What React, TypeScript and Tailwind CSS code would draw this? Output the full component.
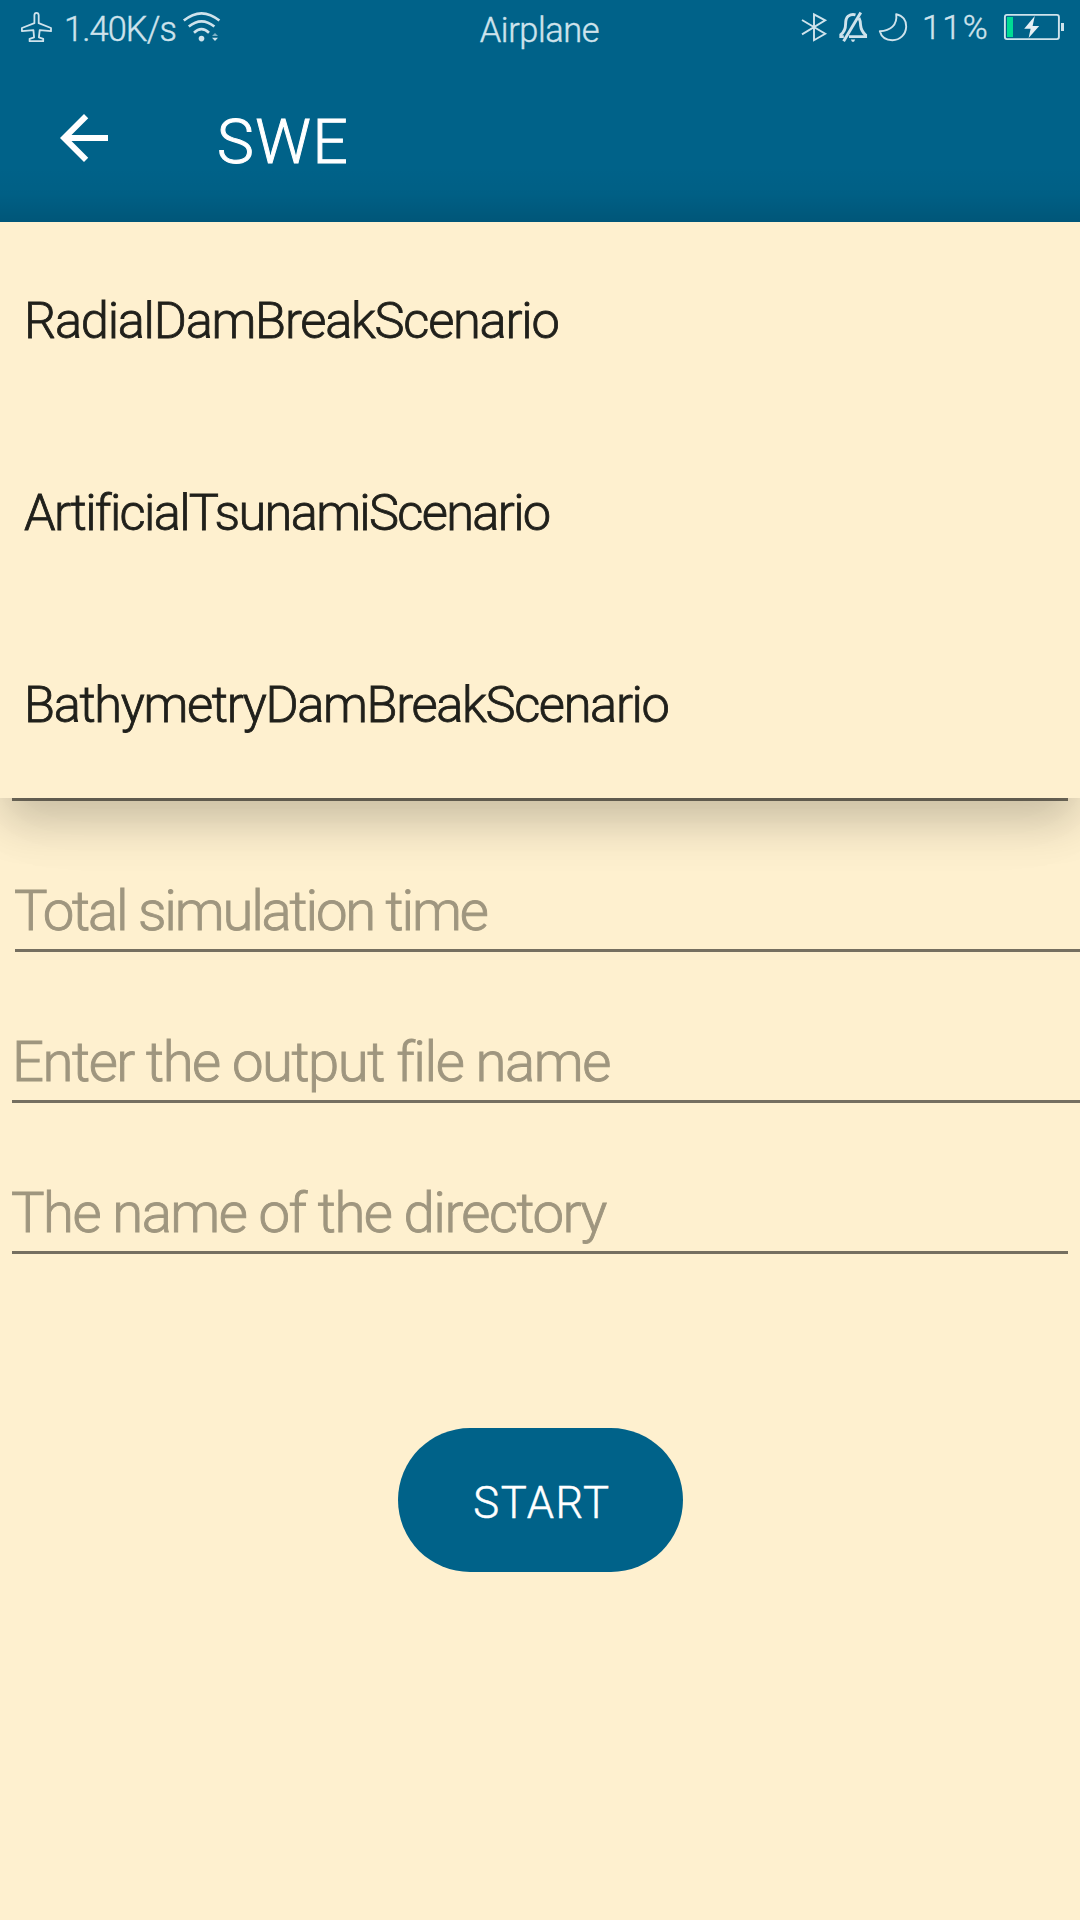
import React from "react";

const INK = "#cfe3ec";

function AirplaneIcon() {
  return (
    <svg className="h-[34px] w-[36px] shrink-0" viewBox="19 10 36 34" fill="none" stroke={INK} strokeWidth="1.8" strokeLinejoin="round">
      <path d="M34.4 15.3Q34.4 12.8 36.5 12.8T38.7 15.3V23.2L51 28V31.2L39.7 30.2L38.9 37.3L43.2 38.8V41.2H29.6V38.8L34.1 37.3L33.4 30.2L21.9 31.2V28L34.4 23.2Z" />
    </svg>
  );
}

function WifiIcon() {
  return (
    <svg className="h-[34px] w-[40px] shrink-0" viewBox="182 10 40 34" fill="none" stroke={INK} strokeWidth="2.6">
      <path d="M183.8 20.6Q201.5 6 219.4 20.6" />
      <path d="M188.8 26.6Q201.5 16 214.4 26.6" />
      <path d="M194 32.8Q201.5 25.6 209 32.8" />
      <circle cx="201.5" cy="38.6" r="2.8" fill={INK} stroke="none" />
      <path d="M212 36H218L215 33Z" fill={INK} fillOpacity="0.6" stroke="none" />
      <path d="M212 37.7H218L215 41Z" fill={INK} stroke="none" />
    </svg>
  );
}

function BluetoothIcon() {
  return (
    <svg className="h-[34px] w-[28px] shrink-0" viewBox="800 10 28 34" fill="none" stroke={INK} strokeWidth="1.9">
      <path d="M802 20L825.2 33.8L814 40.2V14.3L825.2 20.4L802 34.4" />
    </svg>
  );
}

function MutedBellIcon() {
  return (
    <svg className="h-[34px] w-[32px] shrink-0" viewBox="837 10 32 34" fill="none" stroke={INK} strokeWidth="2.9">
      <path d="M855.5 14.8Q851.5 13.6 848.2 16.2Q845.6 18.5 845.6 24Q845.6 31 840.8 34.6V36.6H843.8M849 36.6H865.6V35Q861.2 31 860.6 25.5Q860.6 21 859 18" />
      <path d="M843.6 41.2L860.8 12.6" />
      <path d="M850.8 39.4H855.2L854 41.8H852Z" fill={INK} stroke="none" />
    </svg>
  );
}

function MoonIcon() {
  return (
    <svg className="h-[34px] w-[32px] shrink-0" viewBox="877 10 32 34" fill="none" stroke={INK} strokeWidth="1.9" strokeLinejoin="round">
      <path d="M896.2 14.2C903 15.6 906.4 20.6 906.2 26.6C905.8 34.5 900 40.2 892.4 40.2C886.2 40.2 881.4 36.8 879.8 31.2C890.5 31 897.6 25 896.2 14.2Z" />
    </svg>
  );
}

function BatteryIcon() {
  return (
    <svg className="h-[34px] w-[62px] shrink-0" viewBox="1003 10 62 34" fill="none">
      <rect x="1004.9" y="14.9" width="54" height="24.2" rx="2" stroke={INK} strokeWidth="1.9" />
      <rect x="1007" y="17" width="6" height="20" fill="#00dc94" />
      <path d="M1034.8 16L1024.2 28.8H1030.6L1028.6 38L1039.2 26H1032.6Z" fill="#e6f0f4" />
      <rect x="1061" y="23" width="3" height="8" fill={INK} />
    </svg>
  );
}

function StatusBar() {
  return (
    <div className="grid h-[58px] grid-cols-[1fr_auto_1fr] items-start text-[34.4px] leading-[54px] font-light text-[#cfe3ec] [-webkit-text-stroke:0.4px]">
      <div className="flex h-[54px] items-center pl-[19px]">
        <AirplaneIcon />
        <span className="ml-[9px] w-[118px] pt-[3px] whitespace-nowrap tracking-[-0.9px]">1.40K/s</span>
        <WifiIcon />
      </div>
      <span className="-ml-px pt-[3px] tracking-[-0.4px]">Airplane</span>
      <div className="flex h-[54px] items-center justify-end pr-[15px]">
        <BluetoothIcon />
        <span className="w-[9px]" />
        <MutedBellIcon />
        <span className="w-2" />
        <MoonIcon />
        <span className="w-[94px] pt-px pl-[13px] text-[33.8px] tracking-[1.6px]">11%</span>
        <BatteryIcon />
      </div>
    </div>
  );
}

function Header() {
  return (
    <header className="relative h-[222px] bg-[#006289]">
      <StatusBar />
      <div className="flex items-start pl-12">
        <button className="mt-[44px]" aria-label="Back">
          <svg className="block h-[72px] w-[72px]" viewBox="0 0 24 24" fill="#fff">
            <path d="M20 11H7.83l5.59-5.59L12 4l-8 8 8 8 1.41-1.41L7.83 13H20v-2z" />
          </svg>
        </button>
        <h1 className="mt-[48px] ml-[97px] text-[62px] leading-[72px] font-light tracking-[1.6px] text-white [-webkit-text-stroke:1px]">SWE</h1>
      </div>
      <div className="absolute inset-x-0 bottom-0 h-14 bg-linear-to-b from-black/0 via-black/3 to-black/12" />
    </header>
  );
}

function ScenarioMenu() {
  const row = "flex h-[192px] items-center pt-[5px] pl-6 text-[50.6px] leading-[60px]";
  return (
    <ul className="relative z-10 bg-[#fef0cf] font-light text-[#20201b] [-webkit-text-stroke:0.8px] shadow-[0_26px_44px_-4px_rgba(0,0,0,0.2),0_24px_80px_rgba(0,0,0,0.03)]">
      <li className={`${row} tracking-[-1.25px]`}>RadialDamBreakScenario</li>
      <li className={`${row} tracking-[-1.68px]`}>ArtificialTsunamiScenario</li>
      <li className={`${row} tracking-[-1.36px]`}>BathymetryDamBreakScenario</li>
    </ul>
  );
}

function Form() {
  const field = "flex h-[151px] items-end border-b-[3px] border-[#756f60] text-[56.3px] leading-[76px]";
  return (
    <div className="font-light text-[#9f967f] [-webkit-text-stroke:0.9px]">
      <div className="mx-3 h-[3px] bg-[#756f60]" />
      <div className={`${field} ml-[15px] -indent-px tracking-[-2.2px]`}>Total simulation time</div>
      <div className={`${field} ml-3 tracking-[-1.48px]`}>Enter the output file name</div>
      <div className={`${field} mx-3 -indent-px tracking-[-1.53px]`}>The name of the directory</div>
    </div>
  );
}

export default function App() {
  return (
    <main className="flex h-[1920px] w-[1080px] flex-col overflow-hidden bg-[#fef0cf] font-['Roboto',sans-serif]">
      <div className="relative z-20">
        <Header />
      </div>
      <ScenarioMenu />
      <Form />
      <button className="mt-[174px] ml-[398px] h-[144px] w-[285px] rounded-full bg-[#006289] pt-[7px] pl-[3px] text-[43.6px] leading-[60px] font-light tracking-[1.6px] text-white [-webkit-text-stroke:0.5px]">
        START
      </button>
    </main>
  );
}
